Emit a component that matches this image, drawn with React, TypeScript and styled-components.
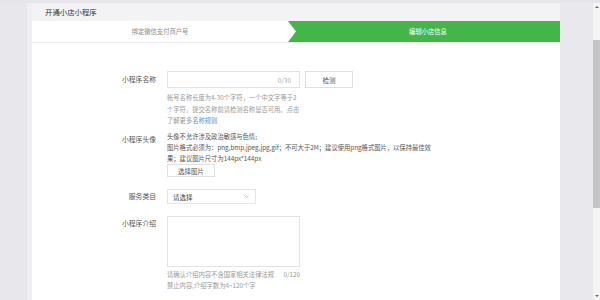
import React from 'react';
import styled, { createGlobalStyle } from 'styled-components';

const GlobalStyle = createGlobalStyle`
  html, body {
    margin: 0;
    padding: 0;
    background: #ffffff;
  }
  body {
    font-family: "Noto Sans CJK SC", "Noto Sans", sans-serif;
    color: #555;
  }
`;

const SCPage = styled.div`
  display: flex;
  width: 600px;
  height: 300px;
  overflow: hidden;
  box-sizing: border-box;
  border-top: 3px solid #e6e6ea;
  background: #fff;
`;

const SCLeftRail = styled.div`
  width: 27px;
  flex-shrink: 0;
  background: #e8e8ec;
  border-right: 5px solid #f0f0f3;
`;

const SCMain = styled.div`
  width: 528px;
  flex-shrink: 0;
  display: flex;
  flex-direction: column;
  background: #fff;
`;

const SCGutter = styled.div`
  width: 33px;
  flex-shrink: 0;
  background: #e9e9ed;
`;

const SCScrollbar = styled.div`
  width: 7px;
  flex-shrink: 0;
  background: #f4f4f4;
  display: flex;
  flex-direction: column;
  align-items: center;
`;

const SCArrow = styled.div<{ down?: boolean }>`
  width: 0;
  height: 0;
  margin: 3px 0;
  border-left: 2px solid transparent;
  border-right: 2px solid transparent;
  ${({ down }) => (down ? 'border-top: 2px solid #666;' : 'border-bottom: 2px solid #666;')}
`;

const SCThumb = styled.div`
  width: 7px;
  height: 168px;
  margin-top: 29px;
  background: #c4c4c6;
`;

const SCSpacer = styled.div`
  flex: 1;
`;

const SCTitleBar = styled.div`
  height: 18px;
  background: #f3f3f6;
  display: flex;
  align-items: center;
  padding-left: 13px;
  padding-bottom: 2px;
  box-sizing: border-box;
  font-size: 7.4px;
  color: #333;
`;

const SCSteps = styled.div`
  display: flex;
  height: 21px;
  border-bottom: 1px solid #ececec;
  background: #fff;
`;

const SCStep = styled.div<{ active?: boolean }>`
  display: flex;
  align-items: center;
  justify-content: center;
  font-size: 6.3px;
  color: ${({ active }) => (active ? '#ffffff' : '#8a8a8a')};
  background: ${({ active }) => (active ? '#44b549' : '#ffffff')};
  width: ${({ active }) => (active ? '272px' : '256px')};
  clip-path: ${({ active }) =>
    active ? 'polygon(0 0, 100% 0, 100% 100%, 0 100%, 8px 50%)' : 'none'};
  padding-left: ${({ active }) => (active ? '8px' : '0')};
  box-sizing: border-box;
`;

const SCForm = styled.div`
  display: flex;
  flex-direction: column;
  padding-top: 28px;
`;

const SCRow = styled.div<{ gap: number }>`
  display: flex;
  margin-top: ${({ gap }) => gap}px;
`;

const SCLabel = styled.div<{ top: number }>`
  width: 124px;
  padding-right: 11px;
  text-align: right;
  font-size: 6.8px;
  color: #555;
  line-height: 11px;
  padding-top: ${({ top }) => top}px;
`;

const SCField = styled.div`
  display: flex;
  flex-direction: column;
`;

const SCInline = styled.div`
  display: flex;
  gap: 5px;
`;

const SCInput = styled.div`
  width: 133px;
  height: 17px;
  box-sizing: border-box;
  border: 1px solid #e3e3e3;
  display: flex;
  align-items: center;
  justify-content: flex-end;
  padding-right: 8px;
  font-size: 6.5px;
  color: #aaa;
`;

const SCButton = styled.div<{ w: number; h: number }>`
  width: ${({ w }) => w}px;
  height: ${({ h }) => h}px;
  box-sizing: border-box;
  border: 1px solid #e0e0e0;
  display: flex;
  align-items: center;
  justify-content: center;
  font-size: 6.5px;
  color: #555;
  background: #fff;
`;

const SCHelpBlock = styled.div`
  margin-top: 4px;
  display: flex;
  flex-direction: column;
`;

const SCHelpLine = styled.div<{ lh?: number }>`
  font-size: 6.3px;
  line-height: ${({ lh }) => lh ?? 11.7}px;
  color: #999;
  white-space: nowrap;
`;

const SCText = styled.div`
  font-size: 6.3px;
  line-height: 11px;
  color: #555;
  white-space: nowrap;
`;

const SCLink = styled.span`
  color: #5d8fcf;
`;

const SCSelect = styled.div`
  width: 89px;
  height: 15px;
  box-sizing: border-box;
  border: 1px solid #e6e6e6;
  display: flex;
  align-items: center;
  justify-content: space-between;
  padding: 0 6px 0 5px;
  font-size: 6.5px;
  color: #444;
`;

const SCTextarea = styled.div`
  width: 133px;
  height: 51px;
  box-sizing: border-box;
  border: 1px solid #e3e3e3;
`;

const SCHintRow = styled.div`
  display: flex;
  justify-content: space-between;
  width: 133px;
  margin-top: 2px;
  font-size: 6.3px;
  line-height: 11px;
  color: #999;
`;

const App = () => {
  return (
    <>
      <GlobalStyle />
      <SCPage>
        <SCLeftRail />
        <SCMain>
          <SCTitleBar>开通小店小程序</SCTitleBar>
          <SCSteps>
            <SCStep>绑定微信支付商户号</SCStep>
            <SCStep active>编辑小店信息</SCStep>
          </SCSteps>
          <SCForm>
            <SCRow gap={0}>
              <SCLabel top={3}>小程序名称</SCLabel>
              <SCField>
                <SCInline>
                  <SCInput>0/30</SCInput>
                  <SCButton w={48} h={17}>检测</SCButton>
                </SCInline>
                <SCHelpBlock>
                  <SCHelpLine>帐号名称长度为4-30个字符，一个中文字等于2</SCHelpLine>
                  <SCHelpLine>个字符。提交名称前请检测名称是否可用。点击</SCHelpLine>
                  <SCHelpLine>
                    了解更多<SCLink>名称规则</SCLink>
                  </SCHelpLine>
                </SCHelpBlock>
              </SCField>
            </SCRow>
            <SCRow gap={4}>
              <SCLabel top={3}>小程序头像</SCLabel>
              <SCField>
                <SCText>头像不允许涉及政治敏感与色情;</SCText>
                <SCText>图片格式必须为：png,bmp,jpeg,jpg,gif；不可大于2M；建议使用png格式图片，以保持最佳效</SCText>
                <SCText>果；建议图片尺寸为144px*144px</SCText>
                <SCButton w={48} h={13}>选择图片</SCButton>
              </SCField>
            </SCRow>
            <SCRow gap={12}>
              <SCLabel top={2}>服务类目</SCLabel>
              <SCSelect>
                <span>请选择</span>
                <svg width="5" height="3" viewBox="0 0 5 3">
                  <path d="M0.5 0.5 L2.5 2.5 L4.5 0.5" stroke="#aaa" strokeWidth="0.7" fill="none" />
                </svg>
              </SCSelect>
            </SCRow>
            <SCRow gap={12}>
              <SCLabel top={2}>小程序介绍</SCLabel>
              <SCField>
                <SCTextarea />
                <SCHintRow>
                  <span>请确认介绍内容不含国家相关法律法规</span>
                  <span>0/120</span>
                </SCHintRow>
                <SCHelpLine lh={11}>禁止内容,介绍字数为4~120个字</SCHelpLine>
              </SCField>
            </SCRow>
          </SCForm>
        </SCMain>
        <SCGutter />
        <SCScrollbar>
          <SCArrow />
          <SCThumb />
          <SCSpacer />
          <SCArrow down />
        </SCScrollbar>
      </SCPage>
    </>
  );
};

export default App;
